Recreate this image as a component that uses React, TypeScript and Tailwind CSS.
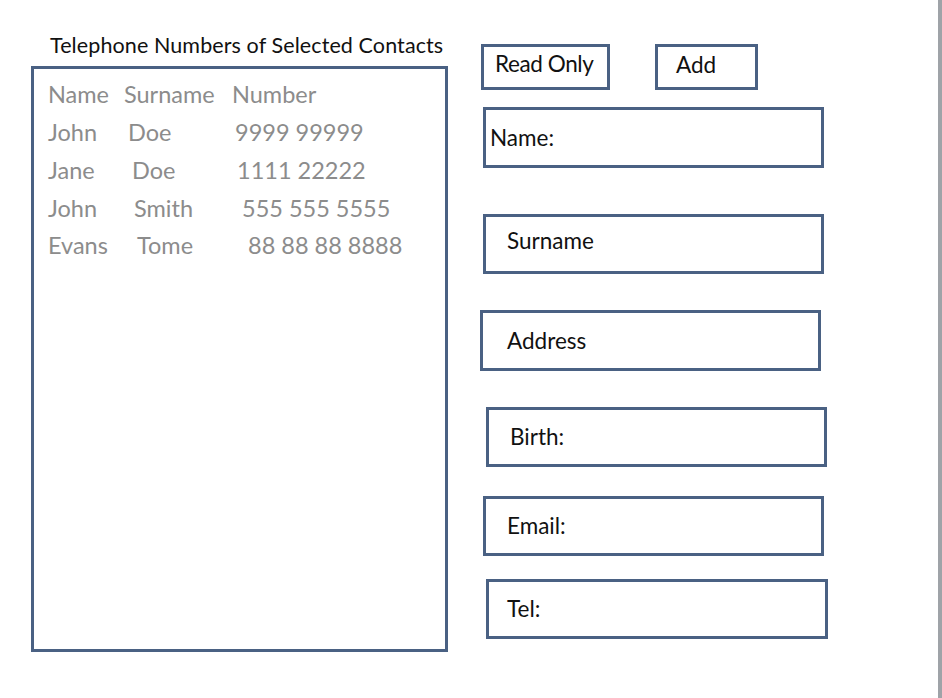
import React from 'react';

const rows = [
  { a: 'Name', b: 'Surname', c: 'Number', wa: 'w-[76px]', wb: 'w-[108px]' },
  { a: 'John', b: 'Doe', c: '9999 99999', wa: 'w-[80px]', wb: 'w-[107px]' },
  { a: 'Jane', b: 'Doe', c: '1111 22222', wa: 'w-[84px]', wb: 'w-[105px]' },
  { a: 'John', b: 'Smith', c: '555 555 5555', wa: 'w-[86px]', wb: 'w-[108px]' },
  { a: 'Evans', b: 'Tome', c: '88 88 88 8888', wa: 'w-[89px]', wb: 'w-[111px]' },
];

const Field: React.FC<{ label: string; className: string }> = ({ label, className }) => (
  <div className={`flex items-center border-[3px] border-[#4a6183] text-[22.5px] text-[#111] ${className}`}>
    {label}
  </div>
);

export default function App() {
  return (
    <div
      className="flex w-[942px] h-[698px] bg-white overflow-hidden"
      style={{ fontFamily: 'Lato, "Open Sans", sans-serif' }}
    >
      {/* left: contacts list */}
      <div className="flex flex-col pl-[31px] pt-[34px]">
        <div className="pl-[19px] h-[23px] leading-[23px] text-[21.5px] text-[#111] whitespace-nowrap tracking-[0.1px]">
          Telephone Numbers of Selected Contacts
        </div>
        <div className="mt-[9px] w-[417px] h-[586px] border-[3px] border-[#4a6183] pt-[7px] pl-[14px]">
          {rows.map((r, i) => (
            <div key={i} className="flex h-[37.75px] items-center text-[23.5px] text-[#8c8c8c] whitespace-nowrap">
              <span className={r.wa}>{r.a}</span>
              <span className={r.wb}>{r.b}</span>
              <span>{r.c}</span>
            </div>
          ))}
        </div>
      </div>

      {/* right: detail form */}
      <div className="flex flex-col ml-[32px]">
        <div className="flex mt-[44px] ml-[1px]">
          <div className="w-[129px] h-[46px] border-[3px] border-[#4a6183] pl-[11px] pb-[7px] flex items-center text-[22.5px] text-[#111] whitespace-nowrap tracking-[-0.4px]">
            Read Only
          </div>
          <div className="ml-[45px] w-[103px] h-[46px] border-[3px] border-[#4a6183] pl-[18px] pb-[5px] flex items-center text-[22.5px] text-[#111]">
            Add
          </div>
        </div>
        <Field label="Name:" className="mt-[17px] ml-[3px] w-[341px] h-[61px] pl-[4px]" />
        <Field label="Surname" className="mt-[46px] ml-[3px] w-[341px] h-[60px] pl-[21px] pb-[6px]" />
        <Field label="Address" className="mt-[36px] ml-0 w-[341px] h-[61px] pl-[24px]" />
        <Field label="Birth:" className="mt-[36px] ml-[6px] w-[341px] h-[60px] pl-[21px]" />
        <Field label="Email:" className="mt-[29px] ml-[3px] w-[341px] h-[60px] pl-[21px]" />
        <Field label="Tel:" className="mt-[23px] ml-[6px] w-[342px] h-[60px] pl-[18px]" />
      </div>

      <div className="ml-auto w-[4px] h-full bg-[#9fa3a8]" />
    </div>
  );
}
